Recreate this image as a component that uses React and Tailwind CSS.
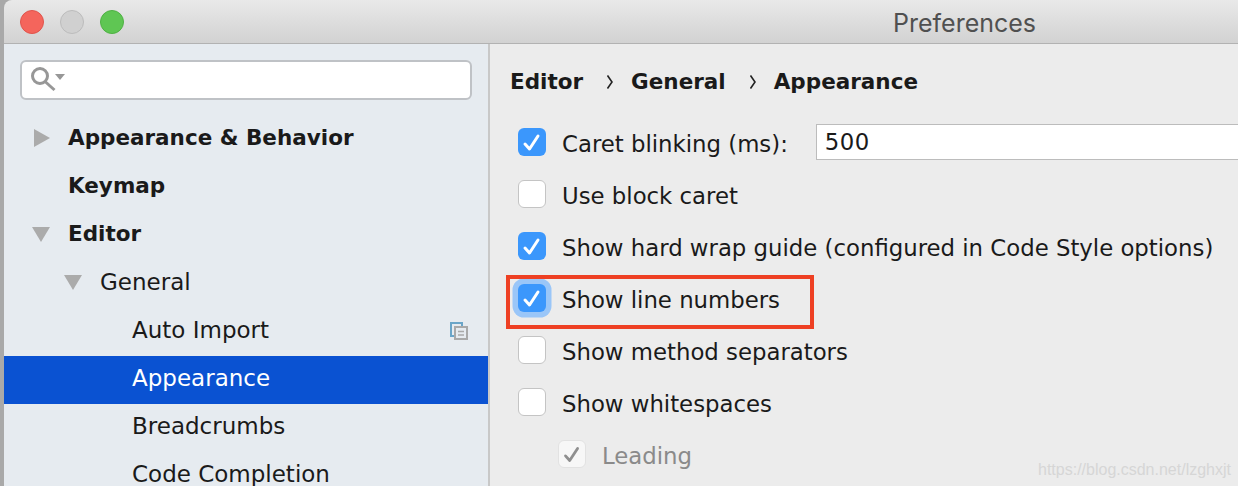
import React from "react";

const Arrow = ({ down }) => (
  <svg width="18" height="18" viewBox="0 0 18 18" className="shrink-0">
    <path d={down ? "M0 2 H18 L9 17 Z" : "M0 0 L16 9 L0 18 Z"} fill="#ababab" />
  </svg>
);

const Tick = ({ color, width = 3 }) => (
  <svg width="28" height="28" viewBox="0 0 28 28">
    <path d="M7 16 L11.5 21 L20 8" fill="none" stroke={color} strokeWidth={width} strokeLinecap="round" strokeLinejoin="round" />
  </svg>
);

const Chevron = () => (
  <svg width="6" height="14" viewBox="0 0 6 14" className="ml-6 mr-[18px] shrink-0">
    <path d="M0.5 0.5 L5 7 L0.5 13.5" fill="none" stroke="#222222" strokeWidth="1.6" />
  </svg>
);

const TreeRow = ({ label, bold, arrow, indent, selected, children }) => (
  <div className={`flex items-center h-12 relative pb-1 ${selected ? "bg-[#0a52d2] text-white" : "text-[#1a1a1a]"} ${bold ? "font-bold text-[21.5px]" : "text-[23px]"}`}>
    <div className={`flex items-center ${indent}`}>
      <div className="w-[36px]">{arrow && <Arrow down={arrow === "down"} />}</div>
      <span>{label}</span>
    </div>
    {children}
  </div>
);

const Checkbox = ({ checked, focused }) => (
  <div
    className={`w-7 h-7 rounded-md flex items-center justify-center shrink-0 ${
      checked ? "bg-[#3b97fc]" : "bg-white border border-[#c4c4c4]"
    } ${focused ? "shadow-[0_0_0_5.5px_#9ac6f8]" : ""}`}
  >
    {checked && <Tick color="white" />}
  </div>
);

const Option = ({ label, checked, focused, children }) => (
  <div className="flex items-center h-[52px] pl-7">
    <Checkbox checked={checked} focused={focused} />
    <span className="ml-4 whitespace-nowrap pt-1">{label}</span>
    {children}
  </div>
);

const App = () => (
  <div className="w-[1238px] h-[486px] overflow-hidden relative bg-[#a9a9a9] pl-1 font-['DejaVu_Sans',sans-serif] text-[22.8px]">
    <div className="h-full rounded-tl-lg overflow-hidden flex flex-col">
      <div className="h-[44px] shrink-0 bg-linear-to-b from-[#e9e9e9] to-[#d2d2d2] border-b border-[#b2b2b2] flex items-center relative">
        <div className="flex gap-4 pl-4">
          <div className="w-6 h-6 rounded-full bg-[#f4655c] border border-[#e0544c]" />
          <div className="w-6 h-6 rounded-full bg-[#d0d0d0] border border-[#bcbcbc]" />
          <div className="w-6 h-6 rounded-full bg-[#5fc653] border border-[#4fb144]" />
        </div>
        <div className="absolute left-[889px] top-[5px] text-[#505050] font-['Inter',sans-serif] text-[25px]">Preferences</div>
      </div>
      <div className="flex flex-1 min-h-0">
        <div className="w-[484px] shrink-0 bg-[#e6ebf0] pt-4">
          <div className="mx-4 h-10 bg-white border-2 border-[#bfc2c6] rounded-md flex items-center pl-2">
            <svg width="36" height="30" viewBox="0 0 36 30">
              <circle cx="10" cy="11" r="7.5" fill="none" stroke="#979797" strokeWidth="3" />
              <path d="M15 16.5 L24.5 25" stroke="#979797" strokeWidth="3" />
              <path d="M25 9 H35 L30 15 Z" fill="#979797" />
            </svg>
          </div>
          <div className="mt-4">
            <TreeRow label="Appearance & Behavior" bold arrow="right" indent="pl-[28px] [&>div>svg]:ml-0.5" />
            <TreeRow label="Keymap" bold indent="pl-[28px]" />
            <TreeRow label="Editor" bold arrow="down" indent="pl-[28px]" />
            <TreeRow label="General" arrow="down" indent="pl-[60px]" />
            <TreeRow label="Auto Import" indent="pl-[92px]">
              <svg width="18" height="18" viewBox="0 0 18 18" className="absolute left-[446px] top-[14px]">
                <rect x="1" y="1" width="11" height="13" fill="none" stroke="#6aa5c8" strokeWidth="2" />
                <rect x="5" y="5" width="12" height="12" fill="#e6ebf0" stroke="#a9a9a9" strokeWidth="2" />
                <path d="M8 9.5 H14 M8 13 H14" stroke="#a9a9a9" strokeWidth="1.5" />
              </svg>
            </TreeRow>
            <TreeRow label="Appearance" selected indent="pl-[92px]" />
            <TreeRow label="Breadcrumbs" indent="pl-[92px]" />
            <TreeRow label="Code Completion" indent="pl-[92px]" />
          </div>
        </div>
        <div className="w-0.5 bg-[#c8c8c8] shrink-0" />
        <div className="flex-1 bg-[#ececec] text-[#1a1a1a] min-w-0">
          <div className="flex items-center h-[72px] pl-[20px] pt-1 font-bold text-[21.5px]">
            <span>Editor</span>
            <Chevron />
            <span>General</span>
            <Chevron />
            <span>Appearance</span>
          </div>
          <Option label="Caret blinking (ms):" checked>
            <div className="ml-[28px] flex-1 h-9 bg-white border border-[#bcbcbc] border-r-0 flex items-center pl-2 tracking-[0.5px]">500</div>
          </Option>
          <Option label="Use block caret" />
          <Option label="Show hard wrap guide (configured in Code Style options)" checked />
          <Option label="Show line numbers" checked focused />
          <Option label="Show method separators" />
          <Option label="Show whitespaces" />
          <div className="flex items-center h-[52px] pl-[68px]">
            <div className="w-[28px] h-[28px] rounded-md bg-[#f7f7f7] border border-[#e2e2e2] flex items-center justify-center">
              <Tick color="#8f8f8f" />
            </div>
            <span className="ml-4 text-[#8a8a8a] pt-1">Leading</span>
          </div>
        </div>
      </div>
    </div>
    <div className="absolute left-[506px] top-[275px] w-[308px] h-[54px] border-4 border-[#ee4023]" />
    <div className="absolute left-[1038px] top-[458px] text-[16px] text-[#d6d6d6] font-['Liberation_Sans',sans-serif]">https://blog.csdn.net/lzghxjt</div>
  </div>
);

export default App;
